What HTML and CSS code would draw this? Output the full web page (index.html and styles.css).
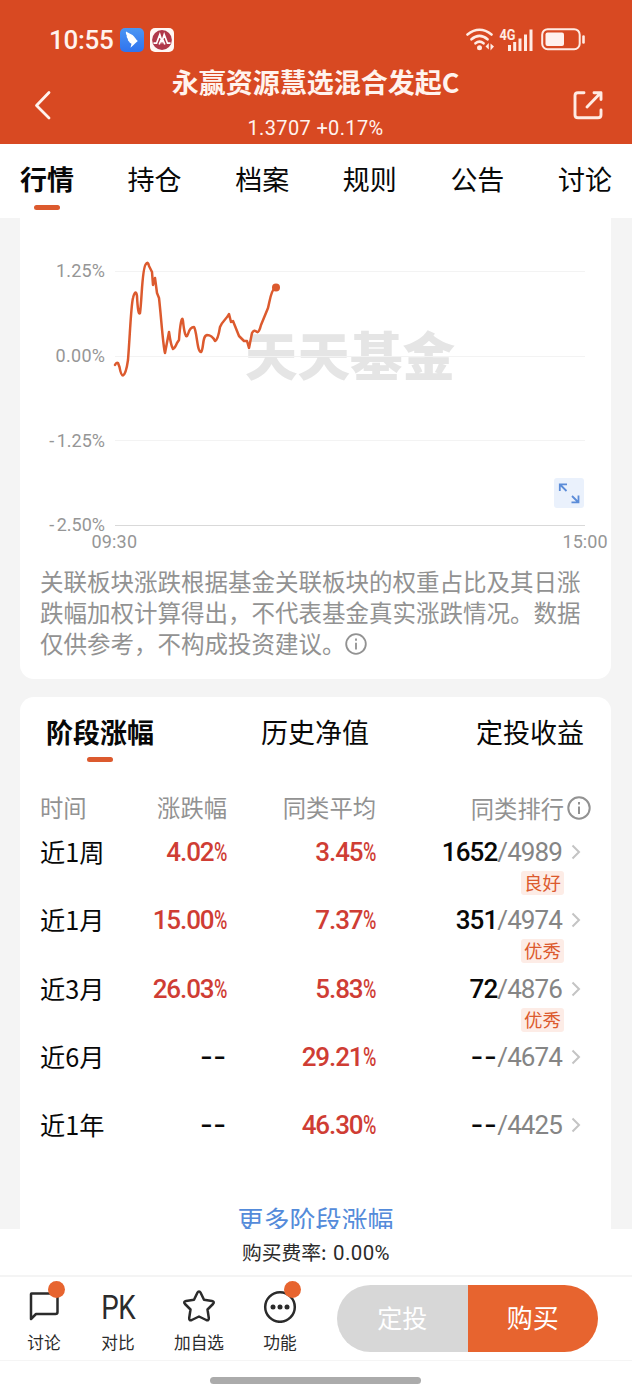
FILE: index.html
```html
<!DOCTYPE html>
<html lang="zh-CN">
<head>
<meta charset="utf-8">
<title>永赢资源慧选混合发起C</title>
<link rel="stylesheet" href="styles.css">
</head>
<body>
<header class="top">
  <div class="status">
    <span class="clock">10:55</span>
    <svg class="app" width="24" height="24" viewBox="0 0 24 24"><defs><linearGradient id="b" x2="0" y2="1"><stop stop-color="#4b96f3"/><stop offset="1" stop-color="#2f73ee"/></linearGradient></defs><rect width="24" height="24" rx="5" fill="url(#b)"/><path d="M6 3.500C9 5.500 12.500 6.200 14 8.500C15.500 10 16 11.500 17.800 13L15 15.500L13.500 17L10.500 19.800L11.500 15.800C10 15.500 9.500 14.500 9.100 13.600C8 12.800 7.700 11.800 7.900 11C6.800 9.800 6.500 8.500 6.800 7.500C6 6.200 5.700 4.800 6 3.500Z" fill="#fff"/></svg>
    <svg class="app" width="24" height="24" viewBox="0 0 24 24"><rect width="24" height="24" rx="5" fill="#fff8f5"/><circle cx="12" cy="12" r="9.900" fill="#b0384a"/><path d="M3.500 15.200H6.500L9.800 6.500L12 13.500L14.200 6.500L17.500 15.200H20.500M9.200 16.500L11 12M14.800 16.500L13 12" fill="none" stroke="#fff" stroke-width="1.700"/></svg>
    <svg class="signals" width="122" height="28" viewBox="464 26 122 28" fill="none" stroke="#ffebe4">
      <path d="M467.500 34.500Q479.500 25 491.500 34.500M471.500 39.300Q479.500 32.500 487.500 39.300M475.500 43.300Q479.500 40 483.500 43.300" stroke-width="2.600" stroke-linecap="round"/>
      <circle cx="479.500" cy="47.700" r="2.500" fill="#ffebe4" stroke="none"/>
      <path d="M485.500 46.500L488.800 43V49.500ZM490.500 43.500V50.500L494 46.500Z" fill="#ffebe4" stroke="none"/>
      <path d="M509.500 45V51M514.700 42V51M520 38.500V51M525.500 34.500V51M531 29.500V51" stroke-width="3"/>
      <text class="lte" x="499.500" y="39.500" stroke="none" textLength="16" lengthAdjust="spacingAndGlyphs">4G</text>
      <rect x="542.200" y="29.200" width="37.500" height="20" rx="5.500" stroke-width="2"/>
      <rect x="545.500" y="32.500" width="18.500" height="13.500" rx="2" fill="#fff1ed" stroke="none"/>
      <path d="M583.500 36.500V42.500" stroke-width="2.600" stroke-linecap="round"/>
    </svg>
  </div>
  <div class="nav">
    <svg width="18" height="30" viewBox="0 0 18 30"><path d="M16 2.500L3.500 15.500L16 28" fill="none" stroke="#fff3ee" stroke-width="2.800" stroke-linecap="round" stroke-linejoin="round"/></svg>
    <div class="fund"><h1>永赢资源慧选混合发起C</h1><p>1.3707 +0.17%</p></div>
    <svg class="share" width="30" height="30" viewBox="0 0 30 30" fill="none" stroke="#ffebe4" stroke-width="2.900" stroke-linecap="round" stroke-linejoin="round"><path d="M11 2.700H5Q2 2.700 2 5.500V25Q2 27.800 5 27.800H25Q28 27.800 28 25V20M14 17L27.500 3M21 2.700H28V9.500"/></svg>
  </div>
</header>
<nav class="tabs"><span class="on">行情</span><span>持仓</span><span>档案</span><span>规则</span><span>公告</span><span>讨论</span></nav>
<main>
  <section class="card chart-card">
    <svg class="chart" width="591" height="340" viewBox="20 218 591 340">
      <text class="mark" x="245" y="376" textLength="210" lengthAdjust="spacingAndGlyphs">天天基金</text>
      <path d="M115 271.500H585M115 356.500H585M115 440.500H585" stroke="#f3f3f3"/>
      <path d="M115 525.500H585" stroke="#d9d9d9"/>
      <g class="axis" text-anchor="end"><text x="105" y="277" textLength="49">1.25%</text><text x="105" y="362" textLength="49.500">0.00%</text><text x="105" y="446.500"><tspan class="minus">-</tspan>1.25%</text><text x="105" y="531"><tspan class="minus">-</tspan>2.50%</text><text x="137" y="548" textLength="45.500">09:30</text><text x="607.500" y="548" textLength="45">15:00</text></g>
      <path d="M115 365Q116.500 362 118 363L119.500 367Q121 375.500 123 375.500Q126 374 128 360C130 335 131 305 133 298Q135.500 288 137 296Q138 316 140 313C142 299 142 267 146 264Q148 261 149 266L152 272L153 285L155 278L157 293L159 298C161 315 163 346 165 353L169 332Q171 346 173 349Q175 348 177 343L179 340C180 325 182 314 183 321C184 331 186 341 188 334Q190 327 194 327C197 331 197 352 201 352C204 349 202 336 207 335Q212 335 215 341Q218 340 220 327C223 320 226 320 229 314L231 322L233 321L239 336L244 341H247L249 348L252 333Q254 329 257 332Q259 333 261 325L268 308C270 300 271 290 275 288" fill="none" stroke="#dc5a2e" stroke-width="2.500" stroke-linejoin="round" stroke-linecap="round"/>
      <circle cx="276" cy="287.500" r="4" fill="#dc5a2e"/>
      <rect x="554" y="478" width="30" height="30" rx="3" fill="#eaf1fc"/>
      <path d="M559.800 491V484.300H567M560.500 485L566.500 491M571.500 502.300H578.500V495.500M578 502L572 496" fill="none" stroke="#5b8cd8" stroke-width="1.800"/>
    </svg>
    <p class="note">关联板块涨跌根据基金关联板块的权重占比及其日涨<br>跌幅加权计算得出，不代表基金真实涨跌情况。数据<br>仅供参考，不构成投资建议。<svg class="info" width="22" height="22" viewBox="0 0 24 24"><circle cx="12" cy="12" r="10.700"/><path d="M12 10.500V18M12 6V8.500"/></svg></p>
  </section>
  <section class="card">
    <div class="subtabs"><span class="on">阶段涨幅</span><span>历史净值</span><span>定投收益</span></div>
    <div class="grid head"><span>时间</span><span>涨跌幅</span><span>同类平均</span><span>同类排行<svg class="info" width="24" height="24" viewBox="0 0 24 24"><circle cx="12" cy="12" r="10.700"/><path d="M12 10.500V18M12 6V8.500"/></svg></span></div>
    <div class="grid row"><span class="period">近1周</span><span class="num">4.02<i>%</i></span><span class="num">3.45<i>%</i></span><div class="rank"><span><b>1652</b>/4989</span><em>良好</em></div><svg class="chev" viewBox="0 0 10 16"><path d="M1.500 1.500L8 8L1.500 14.500"/></svg></div>
    <div class="grid row"><span class="period">近1月</span><span class="num">15.00<i>%</i></span><span class="num">7.37<i>%</i></span><div class="rank"><span><b>351</b>/4974</span><em>优秀</em></div><svg class="chev" viewBox="0 0 10 16"><path d="M1.500 1.500L8 8L1.500 14.500"/></svg></div>
    <div class="grid row"><span class="period">近3月</span><span class="num">26.03<i>%</i></span><span class="num">5.83<i>%</i></span><div class="rank"><span><b>72</b>/4876</span><em>优秀</em></div><svg class="chev" viewBox="0 0 10 16"><path d="M1.500 1.500L8 8L1.500 14.500"/></svg></div>
    <div class="grid row"><span class="period">近6月</span><span class="num none">--</span><span class="num">29.21<i>%</i></span><div class="rank"><span><b class="none">--</b>/4674</span></div><svg class="chev" viewBox="0 0 10 16"><path d="M1.500 1.500L8 8L1.500 14.500"/></svg></div>
    <div class="grid row"><span class="period">近1年</span><span class="num none">--</span><span class="num">46.30<i>%</i></span><div class="rank"><span><b class="none">--</b>/4425</span></div><svg class="chev" viewBox="0 0 10 16"><path d="M1.500 1.500L8 8L1.500 14.500"/></svg></div>
    <div class="more">更多阶段涨幅</div>
  </section>
</main>
<footer>
  <div class="fee">购买费率: <span>0.00%</span></div>
  <div class="actions">
    <div class="act a1"><svg width="34" height="34" viewBox="0 0 34 34"><path d="M4.500 4.500H28.500Q30.500 4.500 30.500 6.500V23Q30.500 25 28.500 25H9L4 30V5Q4 4.500 4.500 4.500Z"/></svg><u></u>讨论</div>
    <div class="act a2"><strong>PK</strong>对比</div>
    <div class="act a3"><svg width="34" height="34" viewBox="0 0 34 34"><path d="M17 2.500Q18 2.500 18.500 3.500L22 10.800L30 12Q33 12.600 31 15L25.500 20.500L26.800 29Q27 32 24.200 31L17 27.500L9.800 31Q7 32 7.200 29L8.500 20.500L3 15Q1 12.600 4 12L12 10.800L15.500 3.500Q16 2.500 17 2.500Z"/></svg>加自选</div>
    <div class="act a4"><svg width="34" height="34" viewBox="0 0 34 34"><circle cx="17" cy="18" r="14.800"/><g fill="#2b2b2b" stroke="none"><circle cx="10" cy="18" r="2.500"/><circle cx="17" cy="18" r="2.500"/><circle cx="24" cy="18" r="2.500"/></g></svg><u></u>功能</div>
    <div class="buttons"><span class="plan">定投</span><span class="buy">购买</span></div>
  </div>
  <div class="home"><span></span></div>
</footer>
</body>
</html>
```

FILE: styles.css
```css
* { box-sizing: border-box; }
body {
  margin: 0; width: 632px; height: 1400px; overflow: hidden;
  display: flex; flex-direction: column;
  background: #f4f4f4; color: #080808;
  font-family: "Noto Sans CJK SC", sans-serif;
}
svg { display: block; flex: none; }
h1, p { margin: 0; }
i, em, u { font-style: normal; text-decoration: none; }

.top { height: 144px; flex: none; background: #d84922; color: #fff3ee; }
.status { height: 66px; padding: 14px 46px 0 49px; display: flex; align-items: center; }
.clock { width: 71px; font: 500 26px/30px Roboto, sans-serif; letter-spacing: -.3px; }
.app { margin-right: 6px; }
.signals { margin-left: auto; }
.lte { font: 700 15px Roboto, sans-serif; fill: #ffebe4; }
.nav { display: flex; align-items: flex-start; padding: 0 29px 0 33px; }
.nav > svg { margin-top: 24px; }
.fund { flex: 1; text-align: center; padding-left: 7px; }
.fund h1 { font-size: 27px; line-height: 32px; font-weight: 700; white-space: nowrap; }
.fund p { margin-top: 18px; font: 400 20px/24px Roboto, sans-serif; letter-spacing: .35px; }

.tabs { height: 74px; flex: none; background: #fff; padding: 15px 20px 0; display: flex; justify-content: space-between; font-size: 27px; line-height: 40px; }
.on { font-weight: 700; display: flex; flex-direction: column; align-items: center; }
.on::after { content: ""; width: 26px; height: 5px; border-radius: 3px; background: #dc5a2e; margin-top: 6px; }

main { height: 1011px; flex: none; padding: 0 21px 0 20px; overflow: hidden; }
.card { background: #fff; border-radius: 14px; }
.chart-card { height: 461px; margin-bottom: 18px; border-radius: 0 0 14px 14px; }
.axis { font: 400 18px Roboto, sans-serif; fill: #969696; }
.minus { letter-spacing: 2.5px; }
.mark { font-size: 52px; font-weight: 900; fill: #e5e5e5; }
.note { padding: 8px 0 0 20px; font-size: 23.5px; line-height: 31.2px; color: #929292; white-space: nowrap; }
.info { fill: none; stroke: #929292; stroke-width: 2; }
.note .info { display: inline-block; vertical-align: -2px; margin-left: -1px; }

.subtabs { height: 83px; padding: 15px 27px 0 26px; display: flex; justify-content: space-between; font-size: 27px; line-height: 40px; }
.subtabs .on::after { margin-top: 5px; }
.grid { display: grid; grid-template-columns: 94px 93px 149px 186px 1fr; padding-left: 20px; }
.head { height: 55px; color: #929292; font-size: 23.3px; line-height: 54px; }
.head span:nth-child(2), .head span:nth-child(3) { text-align: right; }
.head span:nth-child(4) { grid-column: 4 / 6; display: flex; justify-content: flex-end; align-items: center; gap: 3px; padding-right: 20px; }
.row { height: 68.25px; line-height: 34px; font-size: 25.2px; }
.period { margin-top: -1px; }
.num { text-align: right; color: #cf3d34; font: 500 26px/34px Roboto, sans-serif; letter-spacing: -1.1px; }
.num i { display: inline-block; width: 13.5px; font-weight: 500; transform: scaleX(.7); transform-origin: left; letter-spacing: 0; }
.none { display: inline-block; color: #080808; letter-spacing: 1px; transform: scaleX(1.35); transform-origin: right; }
.rank { text-align: right; color: #858585; font: 400 26px/34px Roboto, sans-serif; letter-spacing: -.9px; display: flex; flex-direction: column; align-items: flex-end; }
.rank b { font-weight: 500; color: #080808; }
.rank .none { letter-spacing: 1px; }
.rank em { margin: 2px -2px 0 0; height: 24px; padding: 0 3px; border-radius: 3px; background: #fdece6; color: #dc5a2e; font: 400 18.5px/22px "Noto Sans CJK SC", sans-serif; letter-spacing: 0; }
.chev { width: 10px; height: 16px; margin: 9px 0 0 9px; fill: none; stroke: #c4c4c4; stroke-width: 2; }
.more { height: 60px; margin-top: 24px; text-align: center; font-size: 26px; line-height: 38px; color: #548bda; }

footer { flex: 1; background: #fff; color: #2b2b2b; }
.fee { height: 48px; text-align: center; font-size: 19.8px; line-height: 45px; border-bottom: 2px solid #f4f4f4; }
.fee span { font: 400 20.5px Roboto, sans-serif; margin-left: 2px; letter-spacing: .4px; }
.actions { height: 84px; display: flex; align-items: flex-start; border-bottom: 1px solid #f5f5f5; }
.act { width: 74px; padding-top: 12px; position: relative; display: flex; flex-direction: column; align-items: center; font-size: 16.7px; line-height: 24px; white-space: nowrap; }
.act svg { fill: none; stroke: #2b2b2b; stroke-width: 2.5; stroke-linejoin: round; margin-bottom: 7px; }
.act strong { height: 41px; font: 400 33px/37px Roboto, sans-serif; letter-spacing: -.5px; transform: scaleX(.84); }
.act u { position: absolute; width: 17px; height: 17px; border-radius: 50%; background: #e7642f; top: 4px; left: 41px; }
.a1 { margin-left: 7px; }
.a3 { width: 88px; }
.buttons { margin: 8px 0 0 20px; display: flex; width: 261px; height: 67px; border-radius: 34px; overflow: hidden; color: #fff; font-size: 26px; line-height: 64px; text-align: center; }
.plan { flex: 1; background: #d7d7d7; font-size: 25px; }
.buy { flex: 1; background: #e7642f; }
.home { display: flex; justify-content: center; padding: 16px 1px 0 0; }
.home span { width: 211px; height: 7px; border-radius: 4px; background: #ababab; }
```
